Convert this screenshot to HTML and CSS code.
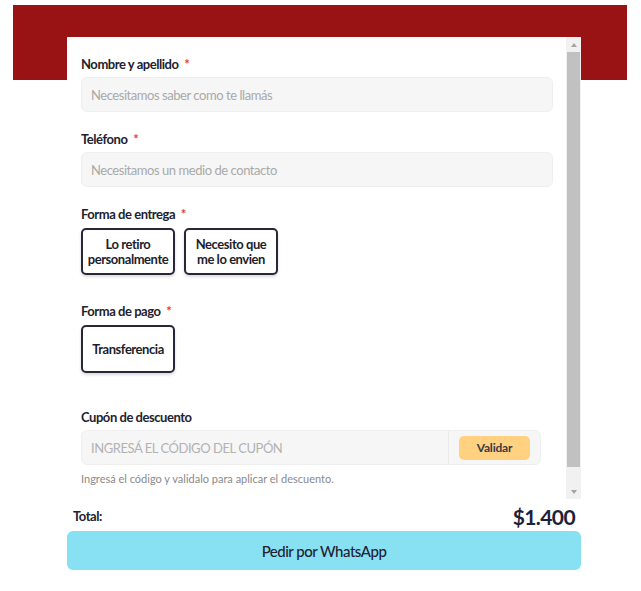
FILE: index.html
```html
<!DOCTYPE html>
<html lang="es">
<head>
<meta charset="utf-8">
<title>Pedido</title>
<link rel="stylesheet" href="styles.css">
</head>
<body>
<div class="page">
  <div class="banner"></div>
</div>
<div class="modal">
  <div class="scroll-wrap">
    <div class="scroll">
      <div class="field">
        <label class="label">Nombre y apellido <span class="req">*</span></label>
        <div class="input">Necesitamos saber como te llamás</div>
      </div>
      <div class="field">
        <label class="label">Teléfono <span class="req">*</span></label>
        <div class="input">Necesitamos un medio de contacto</div>
      </div>
      <div class="field field-opts">
        <label class="label">Forma de entrega <span class="req">*</span></label>
        <div class="opts">
          <button class="opt">Lo retiro personalmente</button>
          <button class="opt">Necesito que me lo envien</button>
        </div>
      </div>
      <div class="field field-opts2">
        <label class="label">Forma de pago <span class="req">*</span></label>
        <div class="opts">
          <button class="opt opt-tall">Transferencia</button>
        </div>
      </div>
      <div class="field field-last">
        <label class="label">Cupón de descuento</label>
        <div class="coupon">
          <div class="coupon-input">INGRESÁ EL CÓDIGO DEL CUPÓN</div>
          <div class="coupon-action"><button class="validar">Validar</button></div>
        </div>
        <p class="help">Ingresá el código y validalo para aplicar el descuento.</p>
      </div>
    </div>
    <div class="sbar" aria-hidden="true">
      <div class="sbar-btn"><span class="arrow-up"></span></div>
      <div class="sbar-track">
        <div class="sbar-thumb"></div>
      </div>
      <div class="sbar-btn"><span class="arrow-down"></span></div>
    </div>
  </div>
  <div class="footer">
    <div class="total-row">
      <span class="total-label">Total:</span>
      <span class="total-value">$1.400</span>
    </div>
    <button class="wa">Pedir por WhatsApp</button>
  </div>
</div>
</body>
</html>
```

FILE: styles.css
```css
* { box-sizing: border-box; }
html, body {
  margin: 0;
  padding: 0;
  background: #ffffff;
  font-family: Lato, "Noto Sans", "Liberation Sans", sans-serif;
  color: #222230;
}
.page {
  padding: 5px 14px 0 13px;
}
.banner {
  height: 75px;
  background: #991214;
}
.modal {
  position: absolute;
  left: 67px;
  top: 37px;
  width: 514px;
  background: #ffffff;
}
.scroll-wrap {
  display: flex;
  height: 462px;
}
.scroll {
  flex: 1;
  overflow: hidden;
  padding: 19px 13px 32px 14px;
  background: #ffffff;
}
.sbar {
  width: 15px;
  display: flex;
  flex-direction: column;
  background: #f1f1f1;
}
.sbar-btn {
  height: 15px;
  display: flex;
  align-items: center;
  justify-content: center;
  background: #f1f1f1;
}
.arrow-up {
  width: 0;
  height: 0;
  border-left: 3.5px solid transparent;
  border-right: 3.5px solid transparent;
  border-bottom: 4px solid #a3a3a3;
}
.arrow-down {
  width: 0;
  height: 0;
  border-left: 3.5px solid transparent;
  border-right: 3.5px solid transparent;
  border-top: 4px solid #a3a3a3;
}
.sbar-track {
  flex: 1;
  padding: 0 1px;
}
.sbar-thumb {
  height: 415px;
  background: #c1c1c1;
}
.field {
  margin-bottom: 19px;
}
.field-opts { margin-bottom: 28px; }
.field-opts2 { margin-bottom: 36px; }
.field-last { margin-bottom: 0; }
.label {
  display: block;
  font-size: 13px;
  line-height: 16px;
  font-weight: 700;
  letter-spacing: -0.45px;
  color: #22222e;
  margin-bottom: 5px;
}
.req {
  color: #e53935;
  margin-left: 3px;
}
.input {
  height: 35px;
  border: 1px solid #efefef;
  background: #f6f6f6;
  border-radius: 6px;
  padding: 0 9px;
  display: flex;
  align-items: center;
  font-size: 13px;
  letter-spacing: -0.45px;
  color: #a9a9a9;
}
.opts {
  display: flex;
  gap: 9px;
  padding-top: 1px;
}
.opt {
  width: 94px;
  height: 47px;
  border: 2px solid #262839;
  border-radius: 5px;
  background: #ffffff;
  box-shadow: 0 2px 3px rgba(0, 0, 0, 0.15);
  font-family: inherit;
  font-size: 13px;
  font-weight: 700;
  line-height: 15px;
  letter-spacing: -0.45px;
  color: #1d1e2c;
  padding: 0 4px;
}
.opt-tall { height: 48px; }
.coupon {
  width: 460px;
  height: 35px;
  display: flex;
  border: 1px solid #efefef;
  background: #f6f6f6;
  border-radius: 6px;
}
.coupon-input {
  flex: 1;
  display: flex;
  align-items: center;
  padding: 0 9px;
  font-size: 13px;
  letter-spacing: -0.45px;
  color: #b2b2b2;
  border-right: 1px solid #ebebeb;
}
.coupon-action {
  width: 91px;
  display: flex;
  align-items: center;
  padding-left: 10px;
}
.validar {
  width: 71px;
  height: 24px;
  border: none;
  border-radius: 5px;
  background: #ffd181;
  font-family: inherit;
  font-size: 12px;
  font-weight: 700;
  letter-spacing: -0.2px;
  color: #3a3a44;
}
.help {
  margin: 7px 0 0;
  font-size: 11px;
  line-height: 14px;
  color: #8a8a8a;
}
.footer {
  display: flex;
  flex-direction: column;
}
.total-row {
  height: 32px;
  display: flex;
  align-items: center;
  justify-content: space-between;
  padding: 2px 6px 0 6px;
}
.total-label {
  font-size: 13px;
  font-weight: 700;
  letter-spacing: -0.45px;
  color: #22222e;
}
.total-value {
  font-size: 21px;
  font-weight: 700;
  letter-spacing: -0.6px;
  color: #1e2038;
}
.wa {
  height: 39px;
  border: none;
  border-radius: 6px;
  background: #87e1f3;
  font-family: inherit;
  font-size: 15px;
  font-weight: 500;
  letter-spacing: -0.5px;
  color: #22222e;
}
```
